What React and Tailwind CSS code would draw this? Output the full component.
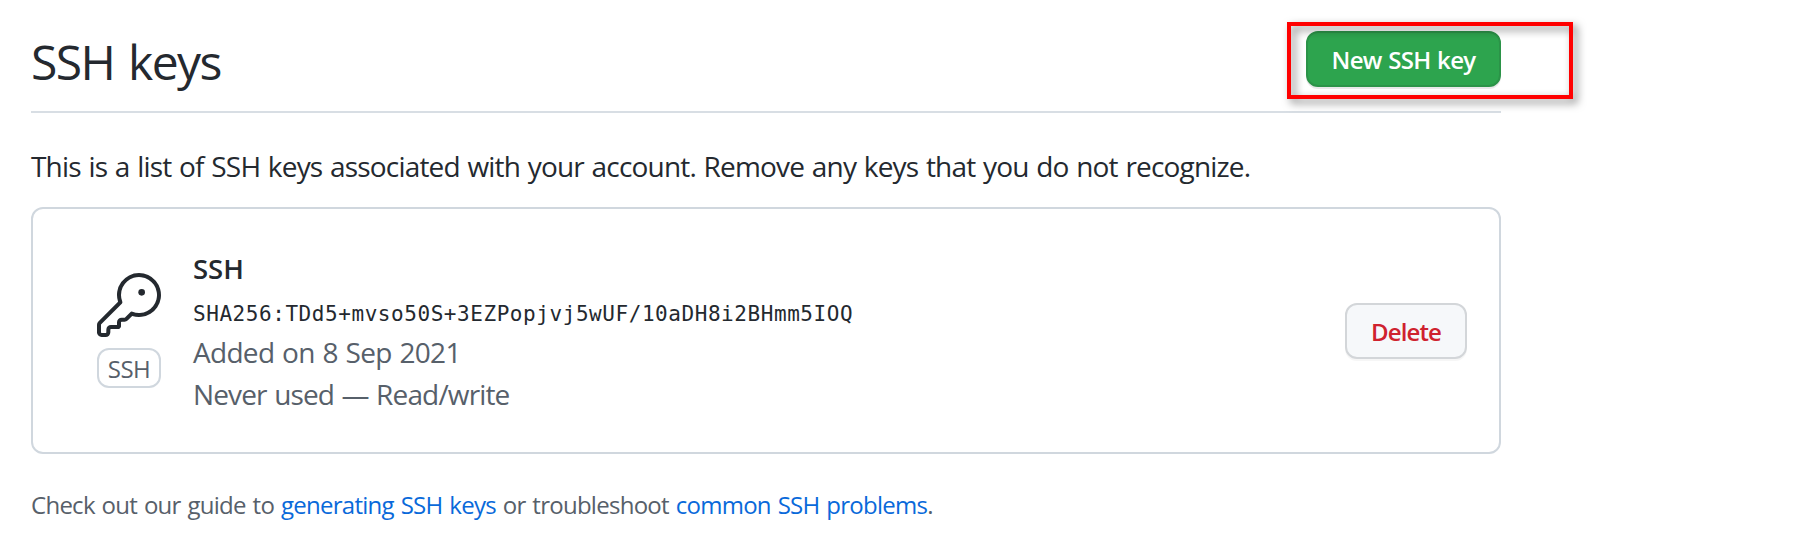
function KeyIcon() {
  return (
    <svg viewBox="0 0 24 24" className="size-16 fill-[#24292f]" aria-hidden="true">
      <path d="M16.75 8.5a1.25 1.25 0 100-2.5 1.25 1.25 0 000 2.5z" />
      <path
        fillRule="evenodd"
        d="M15.75 0a8.25 8.25 0 00-7.851 10.79L.513 18.178A1.75 1.75 0 000 19.414v2.836C0 23.217.784 24 1.75 24h1.5A1.75 1.75 0 005 22.25v-1a.25.25 0 01.25-.25h2.735a.75.75 0 00.545-.22l.214-.213A.875.875 0 009 19.948V18.5a.25.25 0 01.25-.25h1.086c.464 0 .91-.184 1.237-.513l1.636-1.636A8.25 8.25 0 1015.75 0zM9 8.25a6.75 6.75 0 114.288 6.287.75.75 0 00-.804.168l-1.971 1.972a.25.25 0 01-.177.073H9.25A1.75 1.75 0 007.5 18.5v1H5.25a1.75 1.75 0 00-1.75 1.75v1a.25.25 0 01-.25.25h-1.5a.25.25 0 01-.25-.25v-2.836a.25.25 0 01.073-.177l7.722-7.721a.75.75 0 00.168-.804A6.73 6.73 0 019 8.25z"
      />
    </svg>
  );
}

function KeyCard() {
  return (
    <section className="flex h-[247px] items-start rounded-xl border-2 border-[#d0d7de] pr-8">
      <div className="mt-16 ml-16 flex w-16 flex-col items-center">
        <KeyIcon />
        <span className="mt-[11px] flex h-10 w-16 items-center justify-center rounded-xl border-2 border-[#d0d7de] pt-[2px] text-[24px] tracking-[-0.5px] text-[#57606a]">
          SSH
        </span>
      </div>
      <div className="mt-[38px] ml-8 flex-1 whitespace-nowrap text-[#57606a]">
        <strong className="block h-[44px] text-[27.5px] leading-[44px] font-semibold text-[#24292f]">SSH</strong>
        <code className="block h-[40px] font-['DejaVu_Sans_Mono',monospace] text-[21px] leading-[46px] tracking-[0.56px] text-[#24292f]">
          SHA256:TDd5+mvso50S+3EZPopjvj5wUF/10aDH8i2BHmm5IOQ
        </code>
        <span className="block h-[42px] text-[28px] leading-[42px] tracking-[-0.7px] [word-spacing:1.2px]">Added on 8 Sep 2021</span>
        <span className="block h-[42px] text-[28px] leading-[42px] tracking-[-0.85px] [word-spacing:1px]">Never used — Read/write</span>
      </div>
      <button className="mt-[94px] flex h-14 w-[122px] items-center justify-center rounded-xl border-2 border-[#d3d6d9] bg-[#f6f8fa] pt-[2px] text-[24px] font-semibold tracking-[-0.9px] text-[#cf222e] shadow-[0_2px_0_rgba(27,31,36,0.04)]">
        Delete
      </button>
    </section>
  );
}

export default function App() {
  return (
    <main className="h-[557px] w-[1813px] overflow-hidden bg-white pt-[31px] pl-[31px] font-['Open_Sans',sans-serif] text-[#24292f]">
      <div className="w-[1470px]">
        <header className="flex h-[82px] items-start justify-between border-b-2 border-[#d8dee4]">
          <h1 className="text-[48px] leading-[62px] font-normal tracking-[-1.6px] whitespace-nowrap [word-spacing:3px]">SSH keys</h1>
          <div className="relative">
            <button className="flex h-14 w-[195px] items-center justify-center rounded-xl border-2 border-[#2b9348] bg-[#2da44e] pt-[2px] text-[24px] font-semibold tracking-[-0.7px] whitespace-nowrap text-white shadow-[0_2px_0_rgba(27,31,36,0.1)] [word-spacing:1px]">
              New SSH key
            </button>
            <svg
              className="pointer-events-none absolute top-[-9px] left-[-19px] overflow-visible drop-shadow-[4px_4px_4px_rgba(0,0,0,0.5)]"
              width="286"
              height="77"
            >
              <rect x="2" y="2" width="282" height="73" fill="none" stroke="#ff0000" strokeWidth="4" />
            </svg>
          </div>
        </header>
        <p className="mt-[32px] mb-[20px] h-[42px] text-[28px] leading-[42px] tracking-[-0.82px] whitespace-nowrap [word-spacing:1.2px]">
          This is a list of SSH keys associated with your account. Remove any keys that you do not recognize.
        </p>
        <KeyCard />
        <p className="mt-[33px] text-[24px] leading-[36px] tracking-[-0.73px] whitespace-nowrap text-[#57606a] [word-spacing:1.3px]">
          Check out our guide to <a className="text-[#0969da]">generating SSH keys</a> or troubleshoot{" "}
          <a className="text-[#0969da]">common SSH problems</a>.
        </p>
      </div>
    </main>
  );
}
